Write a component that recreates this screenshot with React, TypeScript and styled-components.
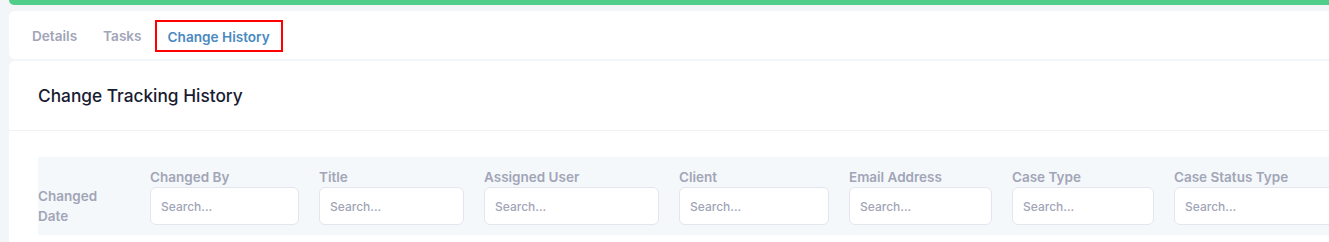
import styled, { createGlobalStyle } from "styled-components"

const GlobalStyle = createGlobalStyle`
  html, body {
    margin: 0;
    background: #f3f6f9;
    overflow: hidden;
  }
  body {
    font-family: Inter, "Noto Sans", sans-serif;
  }
`

const Page = styled.div`
  width: 1360px;
  padding-left: 9px;
  box-sizing: border-box;
`

const StatusStrip = styled.div`
  height: 5px;
  background: #50cd89;
  border-bottom-left-radius: 6px;
`

const TabsCard = styled.nav`
  margin-top: 6px;
  height: 48px;
  display: flex;
  align-items: center;
  padding-left: 10px;
  background: #fff;
  border-radius: 6px 0 0 6px;
`

const Tab = styled.button<{ $active?: boolean }>`
  height: 32px;
  margin-top: 2px;
  padding: 0 ${(p) => (p.$active ? "11px" : "13px")};
  border: ${(p) => (p.$active ? "2px solid #ff0000" : "0")};
  background: none;
  font-family: inherit;
  font-size: 13.6px;
  font-weight: 600;
  line-height: 30px;
  color: ${(p) => (p.$active ? "#4a89bf" : "#a1a5b7")};
  cursor: pointer;
`

const Card = styled.section`
  margin-top: 2px;
  background: #fff;
  border-radius: 6px 0 0 0;
`

const CardHeader = styled.header`
  height: 69px;
  display: flex;
  align-items: center;
  padding-left: 29px;
  border-bottom: 1px solid #eff2f5;
`

const CardTitle = styled.h3`
  margin: 0;
  font-size: 17.3px;
  font-weight: 500;
  color: #181c32;
`

const CardBody = styled.div`
  padding: 26px 0 20px 29px;
`

const FilterRow = styled.div`
  display: grid;
  grid-template-columns: 92px 149px 145px 175px 150px 143px 142px 160px;
  column-gap: 20px;
  align-items: end;
  padding: 10px 0;
  background: #f5f8fa;
`

const Column = styled.div`
  display: flex;
  flex-direction: column;
`

const Label = styled.span`
  font-size: 13.5px;
  font-weight: 600;
  line-height: 20px;
  color: #a1a5b7;
  white-space: nowrap;
`

const StackedLabel = styled(Label)`
  margin-bottom: -1px;
`

const SearchInput = styled.input`
  height: 38px;
  box-sizing: border-box;
  width: 100%;
  padding: 0 10px;
  border: 1px solid #e4e6ef;
  border-radius: 6px;
  background: #fff;
  font-family: inherit;
  font-size: 12px;
  font-weight: 500;
  color: #5e6278;
  outline: none;

  &::placeholder {
    color: #a1a5b7;
  }
`

const filters = [
  "Changed By",
  "Title",
  "Assigned User",
  "Client",
  "Email Address",
  "Case Type",
  "Case Status Type",
]

function App() {
  return (
    <Page>
      <GlobalStyle />
      <StatusStrip />
      <TabsCard>
        <Tab>Details</Tab>
        <Tab>Tasks</Tab>
        <Tab $active>Change History</Tab>
      </TabsCard>
      <Card>
        <CardHeader>
          <CardTitle>Change Tracking History</CardTitle>
        </CardHeader>
        <CardBody>
          <FilterRow>
            <Column>
              <StackedLabel>
                Changed
                <br />
                Date
              </StackedLabel>
            </Column>
            {filters.map((f) => (
              <Column key={f}>
                <Label>{f}</Label>
                <SearchInput placeholder="Search..." />
              </Column>
            ))}
          </FilterRow>
        </CardBody>
      </Card>
    </Page>
  )
}

export default App
